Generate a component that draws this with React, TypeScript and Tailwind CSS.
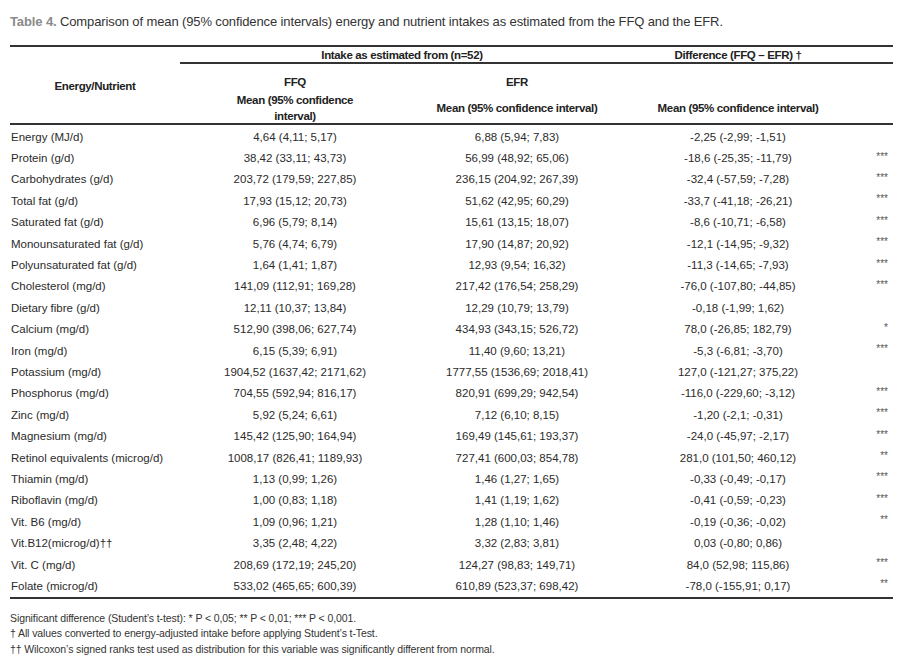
import React from "react";

type Row = [string, string, string, string, string];

const rows: Row[] = [
  ["Energy (MJ/d)", "4,64 (4,11; 5,17)", "6,88 (5,94; 7,83)", "-2,25 (-2,99; -1,51)", ""],
  ["Protein (g/d)", "38,42 (33,11; 43,73)", "56,99 (48,92; 65,06)", "-18,6 (-25,35; -11,79)", "***"],
  ["Carbohydrates (g/d)", "203,72 (179,59; 227,85)", "236,15 (204,92; 267,39)", "-32,4 (-57,59; -7,28)", "***"],
  ["Total fat (g/d)", "17,93 (15,12; 20,73)", "51,62 (42,95; 60,29)", "-33,7 (-41,18; -26,21)", "***"],
  ["Saturated fat (g/d)", "6,96 (5,79; 8,14)", "15,61 (13,15; 18,07)", "-8,6 (-10,71; -6,58)", "***"],
  ["Monounsaturated fat (g/d)", "5,76 (4,74; 6,79)", "17,90 (14,87; 20,92)", "-12,1 (-14,95; -9,32)", "***"],
  ["Polyunsaturated fat (g/d)", "1,64 (1,41; 1,87)", "12,93 (9,54; 16,32)", "-11,3 (-14,65; -7,93)", "***"],
  ["Cholesterol (mg/d)", "141,09 (112,91; 169,28)", "217,42 (176,54; 258,29)", "-76,0 (-107,80; -44,85)", "***"],
  ["Dietary fibre (g/d)", "12,11 (10,37; 13,84)", "12,29 (10,79; 13,79)", "-0,18 (-1,99; 1,62)", ""],
  ["Calcium (mg/d)", "512,90 (398,06; 627,74)", "434,93 (343,15; 526,72)", "78,0 (-26,85; 182,79)", "*"],
  ["Iron (mg/d)", "6,15 (5,39; 6,91)", "11,40 (9,60; 13,21)", "-5,3 (-6,81; -3,70)", "***"],
  ["Potassium (mg/d)", "1904,52 (1637,42; 2171,62)", "1777,55 (1536,69; 2018,41)", "127,0 (-121,27; 375,22)", ""],
  ["Phosphorus (mg/d)", "704,55 (592,94; 816,17)", "820,91 (699,29; 942,54)", "-116,0 (-229,60; -3,12)", "***"],
  ["Zinc (mg/d)", "5,92 (5,24; 6,61)", "7,12 (6,10; 8,15)", "-1,20 (-2,1; -0,31)", "***"],
  ["Magnesium (mg/d)", "145,42 (125,90; 164,94)", "169,49 (145,61; 193,37)", "-24,0 (-45,97; -2,17)", "***"],
  ["Retinol equivalents (microg/d)", "1008,17 (826,41; 1189,93)", "727,41 (600,03; 854,78)", "281,0 (101,50; 460,12)", "**"],
  ["Thiamin (mg/d)", "1,13 (0,99; 1,26)", "1,46 (1,27; 1,65)", "-0,33 (-0,49; -0,17)", "***"],
  ["Riboflavin (mg/d)", "1,00 (0,83; 1,18)", "1,41 (1,19; 1,62)", "-0,41 (-0,59; -0,23)", "***"],
  ["Vit. B6 (mg/d)", "1,09 (0,96; 1,21)", "1,28 (1,10; 1,46)", "-0,19 (-0,36; -0,02)", "**"],
  ["Vit.B12(microg/d)\u2020\u2020", "3,35 (2,48; 4,22)", "3,32 (2,83; 3,81)", "0,03 (-0,80; 0,86)", ""],
  ["Vit. C (mg/d)", "208,69 (172,19; 245,20)", "124,27 (98,83; 149,71)", "84,0 (52,98; 115,86)", "***"],
  ["Folate (microg/d)", "533,02 (465,65; 600,39)", "610,89 (523,37; 698,42)", "-78,0 (-155,91; 0,17)", "**"],
];

export default function App() {
  return (
    <div
      className="w-[914px] h-[671px] bg-white text-[#2b2b2b] pl-[10px]"
      style={{ fontFamily: '"Liberation Sans", Arial, sans-serif' }}
    >
      <div className="pt-[14px] leading-[16px] text-[13px] tracking-[-0.12px] whitespace-nowrap">
        <span className="text-[#8a8a8a] font-bold">Table 4.</span>{" "}
        <span className="text-[#333]">
          Comparison of mean (95% confidence intervals) energy and nutrient intakes as estimated from the FFQ and the EFR.
        </span>
      </div>

      <div className="w-[883px] mt-[15px]">
        {/* Header */}
        <div className="flex border-t-2 border-b-2 border-[#333] text-[11.5px] font-bold tracking-[-0.35px] text-[#222]">
          <div className="w-[170px] flex items-center justify-center pt-[4px]">Energy/Nutrient</div>
          <div className="flex-1 flex flex-col">
            <div className="flex h-[17px] items-center border-b-2 border-[#333] pt-[1px]">
              <div className="w-[444px] text-center leading-[16px]">Intake as estimated from (n=52)</div>
              <div className="w-[228px] text-center leading-[16px]">Difference (FFQ – EFR) †</div>
              <div className="w-[41px]" />
            </div>
            <div className="flex h-[59px]">
              <div className="w-[230px] flex flex-col items-center pt-[10px] leading-[16px]">
                <div>FFQ</div>
                <div className="mt-[2px] w-[150px] text-center">Mean (95% confidence interval)</div>
              </div>
              <div className="w-[214px] flex flex-col items-center pt-[10px] leading-[16px]">
                <div>EFR</div>
                <div className="mt-[10px] text-center">Mean (95% confidence interval)</div>
              </div>
              <div className="w-[228px] flex flex-col items-center pt-[36px] leading-[16px]">
                <div>Mean (95% confidence interval)</div>
              </div>
              <div className="w-[41px]" />
            </div>
          </div>
        </div>

        {/* Body */}
        <div className="border-b-2 border-[#333] text-[11.5px] pt-[1px]">
          {rows.map((r, i) => (
            <div key={i} className="grid grid-cols-[170px_230px_214px_228px_41px] h-[21.4px] items-center leading-[14px] whitespace-nowrap">
              <div className="pl-[1px]">{r[0]}</div>
              <div className="text-center">{r[1]}</div>
              <div className="text-center">{r[2]}</div>
              <div className="text-center">{r[3]}</div>
              <div className="text-right pr-[5px] text-[10px] text-[#555] -mt-[3px]">{r[4]}</div>
            </div>
          ))}
        </div>

        {/* Footnotes */}
        <div className="pt-[12px] text-[10.5px] leading-[15.5px] text-[#333] tracking-[-0.1px]">
          <div>Significant difference (Student’s t-test): * P &lt; 0,05; ** P &lt; 0,01; *** P &lt; 0,001.</div>
          <div>† All values converted to energy-adjusted intake before applying Student’s t-Test.</div>
          <div>†† Wilcoxon’s signed ranks test used as distribution for this variable was significantly different from normal.</div>
        </div>
      </div>
    </div>
  );
}
